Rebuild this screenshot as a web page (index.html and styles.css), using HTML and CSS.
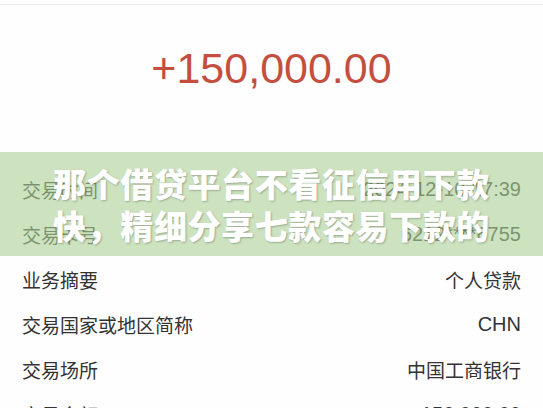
FILE: index.html
```html
<!DOCTYPE html>
<html lang="zh-CN">
<head>
<meta charset="utf-8">
<title>交易详情</title>
<link rel="stylesheet" href="styles.css">
</head>
<body>
<div class="page">
  <div class="topline"></div>
  <div class="amount-wrap">
    <div class="amount">+150,000.00</div>
  </div>
  <ul class="rows">
    <li class="row"><span class="label">交易时间</span><span class="value num">2024-12-10 17:39</span></li>
    <li class="row"><span class="label">交易卡号</span><span class="value num">6212****6755</span></li>
    <li class="row"><span class="label">业务摘要</span><span class="value">个人贷款</span></li>
    <li class="row"><span class="label">交易国家或地区简称</span><span class="value num">CHN</span></li>
    <li class="row"><span class="label">交易场所</span><span class="value">中国工商银行</span></li>
    <li class="row"><span class="label">交易金额</span><span class="value num">150,000.00</span></li>
  </ul>
  <div class="banner">
    <h1 class="banner-title">那个借贷平台不看征信用下款<br>快，精细分享七款容易下款的</h1>
  </div>
</div>
</body>
</html>
```
FILE: styles.css
```css
* { box-sizing: border-box; }
html, body { margin: 0; padding: 0; }
body {
  background: #fefefe;
  font-family: "Liberation Sans", "Noto Sans CJK SC", sans-serif;
  color: #2e2e2e;
  overflow: hidden;
}
.page {
  position: relative;
  width: 543px;
  height: 408px;
  overflow: hidden;
}
.topline {
  height: 5px;
  border-bottom: 1px solid #ececec;
}
.amount-wrap {
  height: 162px;
  padding-top: 38px;
  display: flex;
  justify-content: center;
}
.amount {
  font-size: 43px;
  line-height: 50px;
  color: #c44f3f;
}
.rows {
  list-style: none;
  margin: 0;
  padding: 0 22px;
}
.row {
  height: 45px;
  display: flex;
  align-items: center;
  justify-content: space-between;
  font-size: 19px;
  font-family: "Noto Sans CJK SC", "Liberation Sans", sans-serif;
}
.label { color: #333; }
.value { color: #333; }
.num { font-family: "Liberation Sans", "Noto Sans CJK SC", sans-serif; font-size: 20px; }
.banner {
  position: absolute;
  left: 0;
  right: 0;
  top: 152px;
  height: 104px;
  background: rgba(173, 209, 152, 0.61);
  display: flex;
  align-items: center;
  justify-content: center;
}
.banner-title {
  margin: 0;
  font-family: "Noto Sans CJK SC", sans-serif;
  font-weight: 900;
  font-size: 33px;
  letter-spacing: 0.6px;
  line-height: 42px;
  color: #fff;
  text-align: center;
  text-shadow: 1px 1px 2px rgba(0, 0, 0, 0.25);
}
```
